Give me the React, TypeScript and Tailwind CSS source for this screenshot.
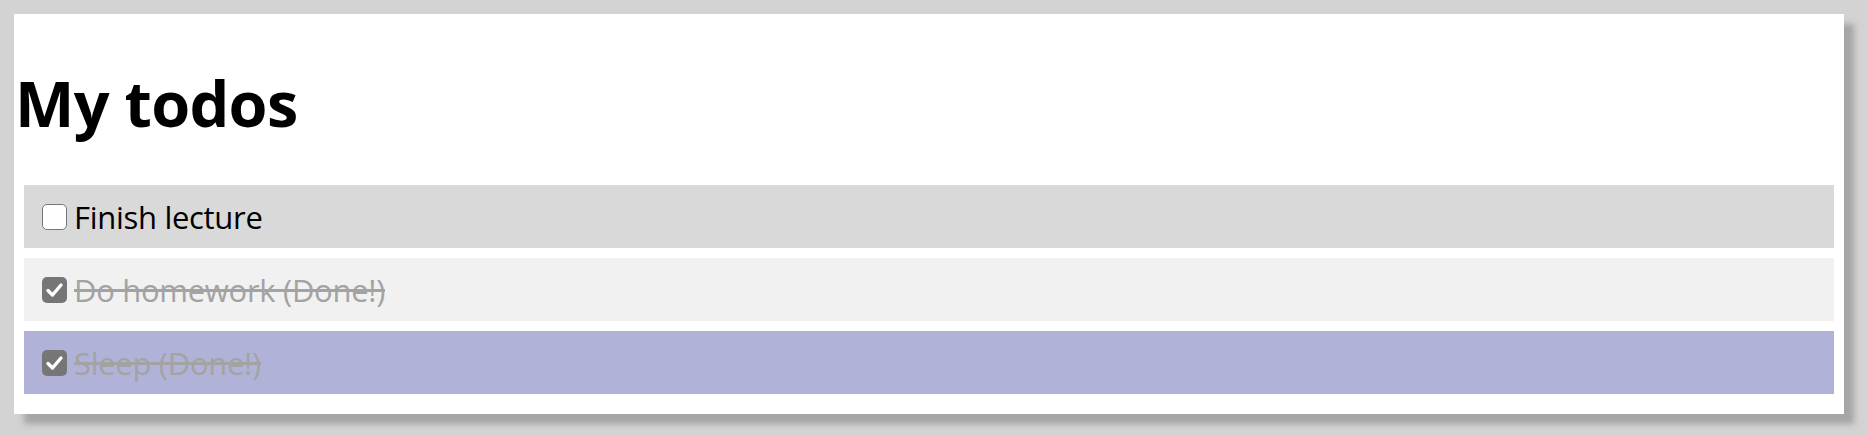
import React from "react";

type Todo = { text: string; done: boolean; bg: string };

const todos: Todo[] = [
  { text: "Finish lecture", done: false, bg: "bg-[#d9d9d9]" },
  { text: "Do homework (Done!)", done: true, bg: "bg-[#f1f1f1]" },
  { text: "Sleep (Done!)", done: true, bg: "bg-[#b1b2d8]" },
];

function Box({ checked }: { checked: boolean }) {
  if (!checked) {
    return (
      <span className="block w-[25px] h-[26px] rounded-[5px] border-[1.5px] border-[#767676] bg-white shrink-0" />
    );
  }
  return (
    <span className="flex items-center justify-center w-[25px] h-[26px] rounded-[5px] bg-[#767676] shrink-0">
      <svg width="25" height="26" viewBox="0 0 25 26">
        <path d="M6 13.5 L10.5 18 L19 8" fill="none" stroke="#fff" strokeWidth="3.4" strokeLinecap="round" strokeLinejoin="round" />
      </svg>
    </span>
  );
}

export default function App() {
  return (
    <div className="min-h-[436px] w-[1867px] bg-[#d3d3d3] pt-[14px] pl-[14px]" style={{ fontFamily: '"Open Sans", "Noto Sans", sans-serif' }}>
      <div className="w-[1830px] h-[400px] bg-white shadow-[10px_10px_6px_#a5a5a5] flex flex-col">
        <h1 className="mt-[44px] ml-[1px] text-[63px] leading-[90px] tracking-[-0.7px] font-bold text-black">My todos</h1>
        <div className="mt-[37px] mx-[10px] flex flex-col gap-[10px]">
          {todos.map((t) => (
            <div key={t.text} className={`h-[63px] ${t.bg} flex items-center pl-[18px]`}>
              <Box checked={t.done} />
              <span
                className={`ml-[7px] text-[31px] leading-[40px] tracking-[-0.3px] ${t.done ? "text-[#a3a3a3] line-through decoration-[#a3a3a3]" : "text-black"}`}
              >
                {t.text}
              </span>
            </div>
          ))}
        </div>
      </div>
    </div>
  );
}
